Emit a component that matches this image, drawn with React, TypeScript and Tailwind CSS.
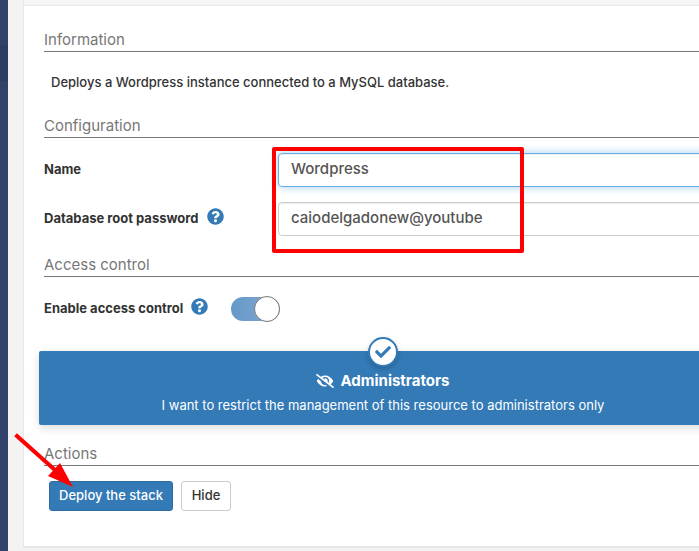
import { useState, type ReactNode } from "react";
import { FaCheck, FaEyeSlash, FaQuestionCircle } from "react-icons/fa";

function SectionTitle({ children }: { children: ReactNode }) {
  return (
    <h2 className="ml-[5px] border-b border-[#777777] pb-px text-[15px] leading-5 text-[#777777]">
      {children}
    </h2>
  );
}

function HelpIcon() {
  return <FaQuestionCircle className="size-[17px] shrink-0 text-[#337ab7]" aria-hidden="true" />;
}

export default function App() {
  const [name, setName] = useState("Wordpress");
  const [password, setPassword] = useState("caiodelgadonew@youtube");
  const [restricted, setRestricted] = useState(true);

  return (
    <div className="relative flex h-screen overflow-hidden bg-[#f3f3f3] font-['Inter','Noto_Sans',sans-serif] text-[13px] text-[#333333]">
      <aside className="w-2 shrink-0 bg-[#30426a] pt-[45px]">
        <div className="h-9 bg-[#2d3e63]" />
      </aside>

      <main className="-mr-11 min-w-0 flex-1 pl-[15px]">
        <div className="border-l border-b-2 border-[#e7e7e7] bg-white">
          <div className="h-1.5 border-b border-[#e7e7e7] bg-[#f6f6f6]" />
          <form className="pt-6 pr-4 pb-[35px] pl-[15px]" onSubmit={(e) => e.preventDefault()}>
            <SectionTitle>Information</SectionTitle>
            <p className="mt-5 mb-6 pl-3 leading-5 font-medium">
              Deploys a Wordpress instance connected to a MySQL database.
            </p>

            <SectionTitle>Configuration</SectionTitle>
            <div className="mt-[15px] mb-[19px] flex flex-col gap-[15px] pl-[5px]">
              <div className="flex">
                <label htmlFor="stack-name" className="w-[234px] shrink-0 pt-1.5 leading-5 font-bold">
                  Name
                </label>
                <input
                  id="stack-name"
                  value={name}
                  onChange={(e) => setName(e.target.value)}
                  className="h-[34px] min-w-0 flex-1 rounded border border-[#66afe9] px-3 pb-1 text-[15px] font-medium text-[#555555] shadow-[inset_0_1px_1px_rgba(0,0,0,0.075),0_0_8px_rgba(102,175,233,0.6)] outline-none"
                />
              </div>
              <div className="flex">
                <label
                  htmlFor="root-password"
                  className="flex w-[234px] shrink-0 items-start gap-2 pt-1.5 leading-5 font-bold"
                >
                  Database root password
                  <HelpIcon />
                </label>
                <input
                  id="root-password"
                  value={password}
                  onChange={(e) => setPassword(e.target.value)}
                  className="h-[34px] min-w-0 flex-1 rounded border border-[#cccccc] px-3 pb-1 text-[15px] font-medium text-[#555555] shadow-[inset_0_1px_1px_rgba(0,0,0,0.075)] outline-none"
                />
              </div>
            </div>

            <SectionTitle>Access control</SectionTitle>
            <div className="mt-[19px] mb-[29px] flex h-[26px] items-center gap-[23px] pl-[5px]">
              <label htmlFor="access-control" className="flex items-start gap-2 pb-0.5 leading-5 font-bold">
                Enable access control
                <HelpIcon />
              </label>
              <span className="flex h-6 w-[49px] items-center justify-end rounded-full bg-linear-to-r from-[#6399c9] to-[#86a9d0]">
                <input
                  id="access-control"
                  type="checkbox"
                  role="switch"
                  defaultChecked
                  className="size-[26px] shrink-0 appearance-none rounded-full border border-[#777777] bg-white"
                />
              </span>
            </div>

            <button
              type="button"
              aria-pressed={restricted}
              onClick={() => setRestricted(!restricted)}
              className="relative flex h-[74px] w-full flex-col items-center rounded-xs bg-[#337ab7] pt-5 text-white shadow-[0_3px_10px_rgba(0,0,0,0.14)]"
            >
              <span className="absolute -top-3.5 left-1/2 flex size-[30px] -translate-x-1/2 items-center justify-center rounded-full border-2 border-[#337ab7] bg-white text-[#337ab7] shadow-[0_2px_5px_rgba(0,0,0,0.2)]">
                <FaCheck className="size-4" aria-hidden="true" />
              </span>
              <span className="flex items-center gap-1.5 text-[15px] leading-5 font-bold">
                <FaEyeSlash className="size-[18px]" aria-hidden="true" />
                Administrators
              </span>
              <span className="mt-1 text-[13px] leading-5 whitespace-nowrap">
                I want to restrict the management of this resource to administrators only
              </span>
            </button>

            <div className="mt-[19px]">
              <SectionTitle>Actions</SectionTitle>
            </div>
            <div className="mt-[15px] flex gap-2 pl-2.5 text-[13px] font-medium">
              <button
                type="submit"
                className="h-[30px] w-[124px] rounded-[3px] border border-[#2e6da4] bg-[#337ab7] text-white"
              >
                Deploy the stack
              </button>
              <button
                type="button"
                className="h-[30px] w-[50px] rounded-[3px] border border-[#cccccc] bg-white text-[#333333]"
              >
                Hide
              </button>
            </div>
          </form>
        </div>
      </main>

      <div className="pointer-events-none absolute top-[147px] left-[272px] h-[106px] w-[252px] rounded-xs border-4 border-[#ff0000]" />
      <svg
        className="pointer-events-none absolute top-[430px] left-2.5"
        width="66"
        height="60"
        viewBox="0 0 66 60"
        aria-hidden="true"
      >
        <path d="M7 6 L46 41" stroke="#ff0000" strokeWidth="4" strokeLinecap="square" />
        <path d="M63 57 L38 46 L50 33 Z" fill="#ff0000" />
      </svg>
    </div>
  );
}
